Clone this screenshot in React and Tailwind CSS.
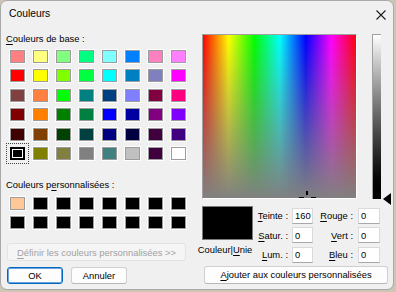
import React from "react";

const baseColors = [
  ["bg-[#ff8080]", "bg-[#ffff80]", "bg-[#80ff80]", "bg-[#00ff80]", "bg-[#80ffff]", "bg-[#0080ff]", "bg-[#ff80c0]", "bg-[#ff80ff]"],
  ["bg-[#ff0000]", "bg-[#ffff00]", "bg-[#80ff00]", "bg-[#00ff40]", "bg-[#00ffff]", "bg-[#0080c0]", "bg-[#8080c0]", "bg-[#ff00ff]"],
  ["bg-[#804040]", "bg-[#ff8040]", "bg-[#00ff00]", "bg-[#008080]", "bg-[#004080]", "bg-[#8080ff]", "bg-[#800040]", "bg-[#ff0080]"],
  ["bg-[#800000]", "bg-[#ff8000]", "bg-[#008000]", "bg-[#008040]", "bg-[#0000ff]", "bg-[#0000a0]", "bg-[#800080]", "bg-[#8000ff]"],
  ["bg-[#400000]", "bg-[#804000]", "bg-[#004000]", "bg-[#004040]", "bg-[#000080]", "bg-[#000040]", "bg-[#400040]", "bg-[#400080]"],
  ["bg-black", "bg-[#808000]", "bg-[#808040]", "bg-[#808080]", "bg-[#408080]", "bg-[#c0c0c0]", "bg-[#400040]", "bg-white"],
];

const customColors = [
  "bg-[#ffc896]", "bg-black", "bg-black", "bg-black", "bg-black", "bg-black", "bg-black", "bg-black",
  "bg-black", "bg-black", "bg-black", "bg-black", "bg-black", "bg-black", "bg-black", "bg-black",
];

function Swatch({ color, selected }) {
  if (selected) {
    return (
      <div className="w-[15px] h-[13px] outline outline-dotted outline-[#444] outline-offset-[3px]">
        <div className={`w-full h-full border-2 border-black shadow-[inset_0_0_0_1px_#ffffff] ${color}`} />
      </div>
    );
  }
  return (
    <div
      className={`w-[15px] h-[13px] border border-[#9c9c9c] shadow-[0_0_0_1px_#ffffff] ${color}`}
    />
  );
}

function U({ children }) {
  return <span className="underline underline-offset-[1.5px]">{children}</span>;
}

function Field({ value }) {
  return (
    <div className="h-[16px] bg-white border border-[#dadada] border-b-[#a8a8a8] flex items-center pl-[2px]">
      {value}
    </div>
  );
}

function Spectrum() {
  return (
    <div className="w-[155px] h-[165px] border-t border-l border-[#a0a0a0] border-b border-r border-b-white border-r-white overflow-hidden">
      <svg width="154" height="164" viewBox="0 0 154 164" className="block">
        <defs>
          <linearGradient id="hue" x1="0" y1="0" x2="1" y2="0">
            <stop offset="0" stopColor="#ff0000" />
            <stop offset="0.1667" stopColor="#ffff00" />
            <stop offset="0.3333" stopColor="#00ff00" />
            <stop offset="0.5" stopColor="#00ffff" />
            <stop offset="0.6667" stopColor="#0000ff" />
            <stop offset="0.8333" stopColor="#ff00ff" />
            <stop offset="1" stopColor="#ff0000" />
          </linearGradient>
          <linearGradient id="sat" x1="0" y1="0" x2="0" y2="1">
            <stop offset="0" stopColor="#808080" stopOpacity="0" />
            <stop offset="1" stopColor="#808080" stopOpacity="1" />
          </linearGradient>
        </defs>
        <rect x="0" y="0" width="154" height="164" fill="url(#hue)" />
        <rect x="0" y="0" width="154" height="164" fill="url(#sat)" />
        <rect x="103" y="156" width="2" height="4" fill="#000" />
        <rect x="96" y="162" width="5" height="2" fill="#000" />
        <rect x="108" y="162" width="5" height="2" fill="#000" />
      </svg>
    </div>
  );
}

export default function App() {
  return (
    <div className="w-[396px] h-[292px] bg-[#cdc5b6] font-['Liberation_Sans',Arial,sans-serif] text-[9.4px] leading-none text-black">
      <div className="w-[394px] h-[290px] bg-[#f0f0f0] border border-[#a9a9a9] rounded-[7px] flex flex-col overflow-hidden">
        <div className="h-[27px] flex items-center justify-between pl-[8px] pr-[7px]">
          <span className="text-[10.3px]">Couleurs</span>
          <svg width="10" height="10" viewBox="0 0 10 10">
            <path d="M0.5 0.5 L9.5 9.5 M9.5 0.5 L0.5 9.5" stroke="#1b1b1b" strokeWidth="1.1" />
          </svg>
        </div>

        <div className="flex flex-row flex-1">
          <div className="w-[201px] pl-[5px] flex flex-col">
            <div className="h-[22px] pt-[6px]">
              <U>C</U>ouleurs de base :
            </div>
            <div className="grid grid-cols-[repeat(8,23px)] auto-rows-[19.4px] ml-[4px]">
              {baseColors.flatMap((row, r) =>
                row.map((c, i) => (
                  <Swatch key={`${r}-${i}`} color={c} selected={r === 5 && i === 0} />
                ))
              )}
            </div>
            <div className="h-[31px] pt-[14px]">
              Couleurs p<U>e</U>rsonnalisées :
            </div>
            <div className="grid grid-cols-[repeat(8,23px)] auto-rows-[19px] ml-[4px]">
              {customColors.map((c, i) => (
                <Swatch key={i} color={c} />
              ))}
            </div>
            <div className="mt-[8px] ml-[1px] w-[179px] h-[18px] bg-[#f5f5f5] border border-[#e3e3e3] rounded-[3px] flex items-center justify-center text-[#a2a2a2]">
              <span>
                <U>D</U>éfinir les couleurs personnalisées &gt;&gt;
              </span>
            </div>
            <div className="mt-[5.5px] ml-[1px] flex gap-[8px]">
              <div className="w-[56px] h-[17px] bg-[#fdfdfd] border border-[#0067c0] shadow-[inset_0_0_0_1px_#6aa3e0] rounded-[3px] flex items-center justify-center">
                OK
              </div>
              <div className="w-[56px] h-[17px] bg-[#fdfdfd] border border-[#d0d0d0] border-b-[#b8b8b8] rounded-[3px] flex items-center justify-center">
                Annuler
              </div>
            </div>
          </div>

          <div className="flex flex-col pt-[6px]">
            <div className="flex flex-row">
              <Spectrum />
              <div className="relative ml-[15px] w-[9px] h-[165px] border-t border-l border-[#a0a0a0] bg-linear-to-b from-white to-black">
                <svg
                  width="8"
                  height="12"
                  viewBox="0 0 8 12"
                  className="absolute left-[10px] bottom-[-6px]"
                >
                  <path d="M0 6 L8 0 L8 12 Z" fill="#000" />
                </svg>
              </div>
            </div>

            <div className="mt-[7px] flex flex-row">
              <div className="w-[51px] flex flex-col items-center">
                <div className="w-[51px] h-[34px] bg-black border border-[#7a7a7a]" />
                <div className="mt-[5px] whitespace-nowrap -ml-[5px]">
                  Couleur|<U>U</U>nie
                </div>
              </div>
              <div className="grid grid-cols-[39px_21px_45px_22px] auto-rows-[19.5px] items-center">
                <div className="text-right pr-[4px]">
                  <U>T</U>einte :
                </div>
                <Field value="160" />
                <div className="text-right pr-[5px]">
                  <U>R</U>ouge :
                </div>
                <Field value="0" />
                <div className="text-right pr-[4px]">
                  <U>S</U>atur. :
                </div>
                <Field value="0" />
                <div className="text-right pr-[5px]">
                  <U>V</U>ert :
                </div>
                <Field value="0" />
                <div className="text-right pr-[4px]">
                  <U>L</U>um. :
                </div>
                <Field value="0" />
                <div className="text-right pr-[5px]">
                  <U>B</U>leu :
                </div>
                <Field value="0" />
              </div>
            </div>

            <div className="mt-[1.5px] ml-[2px] w-[184px] h-[18px] bg-[#fdfdfd] border border-[#d0d0d0] border-b-[#b8b8b8] rounded-[3px] flex items-center justify-center">
              <span>
                <U>A</U>jouter aux couleurs personnalisées
              </span>
            </div>
          </div>
        </div>
      </div>
    </div>
  );
}
